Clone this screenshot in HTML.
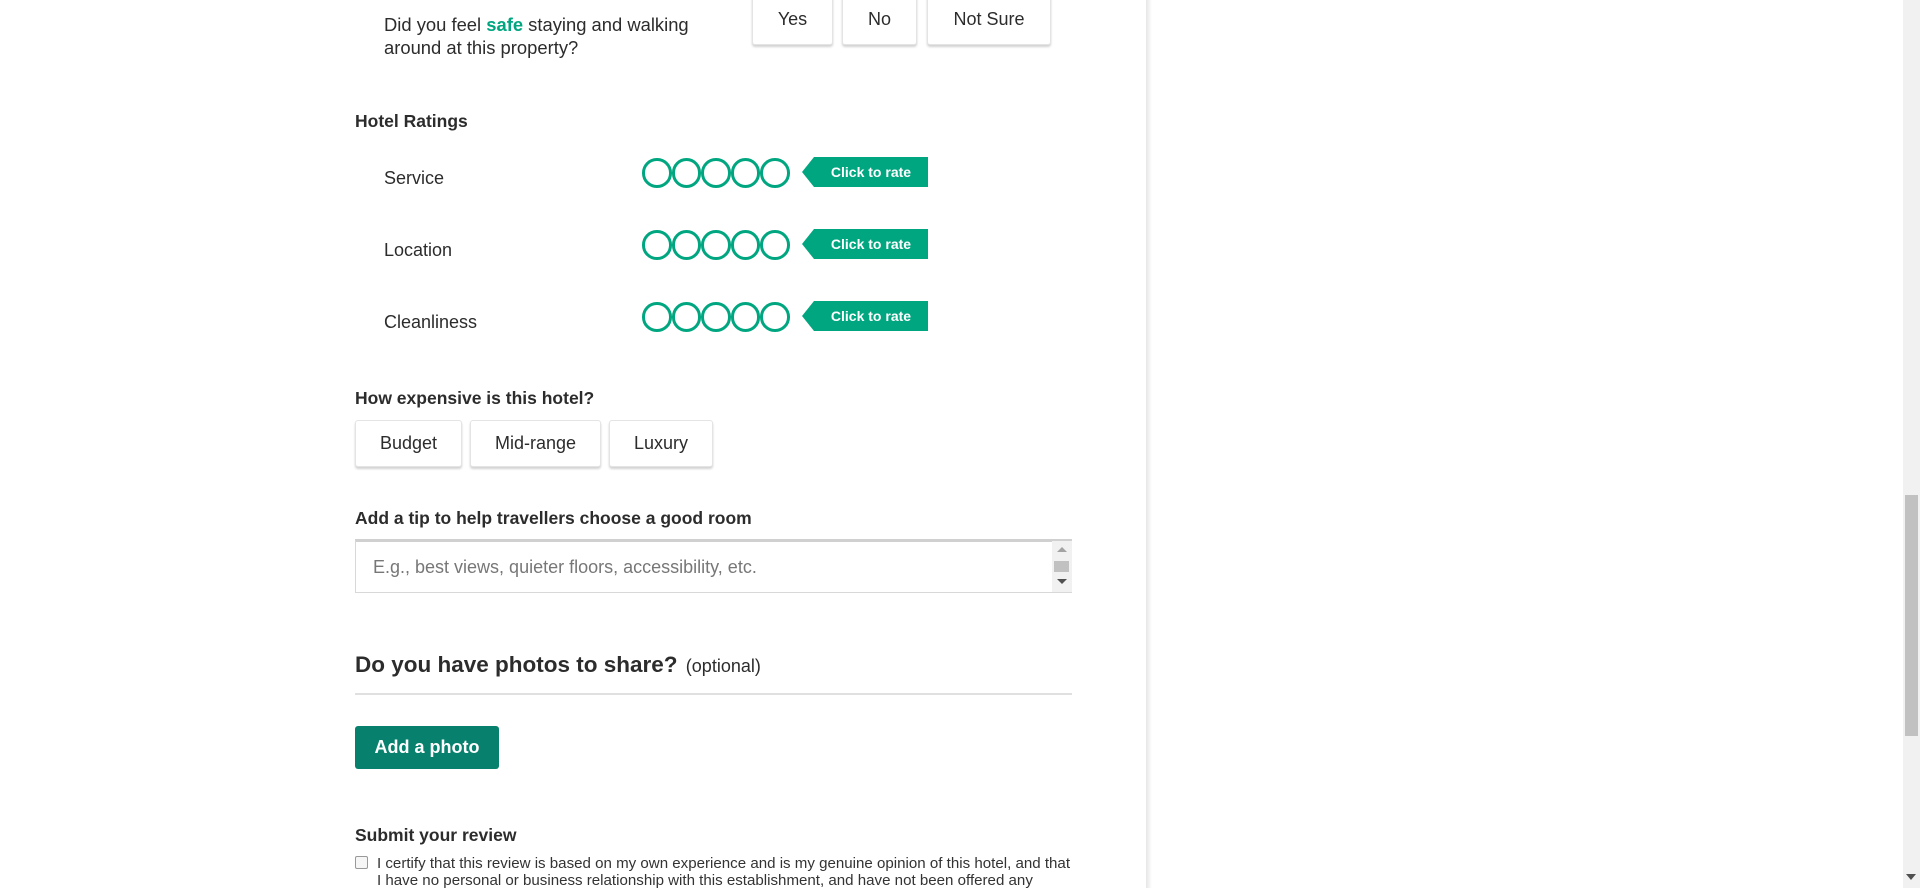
<!DOCTYPE html>
<html><head><meta charset="utf-8"><style>
*{box-sizing:border-box;margin:0;padding:0}
body{width:1920px;height:888px;overflow:hidden;background:#fff;font-family:"Liberation Sans",Arial,sans-serif;color:#2c2c2c;position:relative}
.a{position:absolute;white-space:nowrap}
.btn{position:absolute;background:#fff;border:1px solid #e4e4e4;border-radius:3px;box-shadow:0 2px 2px rgba(0,0,0,.18);font-size:18px;color:#2c2c2c;display:flex;align-items:center;justify-content:center}
.lbl{font-size:18px}
.h{font-size:17.5px;font-weight:bold}
.circles{position:absolute;display:flex}
.circles span{width:29.6px;height:29.6px;border:3px solid #00a680;border-radius:50%;display:block}
.tag{position:absolute;width:126px;height:30px;background:#00a680;color:#fff;font-weight:bold;font-size:14px;display:flex;align-items:center;justify-content:center;padding-left:12px;clip-path:polygon(12px 0,100% 0,100% 100%,12px 100%,0 50%)}
</style></head><body>
<div class="a lbl" style="left:384px;top:13px;line-height:23px;font-size:18.4px">Did you feel <b style="color:#00a680">safe</b> staying and walking<br>around at this property?</div>
<div class="btn" style="left:752px;top:-6px;width:81px;height:51px">Yes</div>
<div class="btn" style="left:842px;top:-6px;width:75px;height:51px">No</div>
<div class="btn" style="left:927px;top:-6px;width:124px;height:51px">Not Sure</div>

<div class="a h" style="left:355px;top:111px">Hotel Ratings</div>

<div class="a lbl" style="left:384px;top:168px">Service</div>
<div class="circles" style="left:642px;top:158px"><span></span><span></span><span></span><span></span><span></span></div>
<div class="tag" style="left:802px;top:157px">Click to rate</div>

<div class="a lbl" style="left:384px;top:240px">Location</div>
<div class="circles" style="left:642px;top:230px"><span></span><span></span><span></span><span></span><span></span></div>
<div class="tag" style="left:802px;top:229px">Click to rate</div>

<div class="a lbl" style="left:384px;top:312px">Cleanliness</div>
<div class="circles" style="left:642px;top:302px"><span></span><span></span><span></span><span></span><span></span></div>
<div class="tag" style="left:802px;top:301px">Click to rate</div>

<div class="a h" style="left:355px;top:388px">How expensive is this hotel?</div>
<div class="btn" style="left:355px;top:420px;width:107px;height:47px">Budget</div>
<div class="btn" style="left:470px;top:420px;width:131px;height:47px">Mid-range</div>
<div class="btn" style="left:609px;top:420px;width:104px;height:47px">Luxury</div>

<div class="a h" style="left:355px;top:508px">Add a tip to help travellers choose a good room</div>
<div class="a" style="left:355px;top:539px;width:717px;height:54px;border:1px solid #d8d8d8;border-top:3px solid #d0d0d0"></div>
<div class="a" style="left:373px;top:557px;font-size:18px;color:#777">E.g., best views, quieter floors, accessibility, etc.</div>
<div class="a" style="left:1052px;top:541px;width:20px;height:51px;background:#f1f1f1"></div>
<div class="a" style="left:1054px;top:561px;width:15px;height:11px;background:#c1c1c1"></div>
<div class="a" style="left:1057px;top:547px;border-left:5px solid transparent;border-right:5px solid transparent;border-bottom:5px solid #a3a3a3"></div>
<div class="a" style="left:1057px;top:579px;border-left:5px solid transparent;border-right:5px solid transparent;border-top:5px solid #505050"></div>

<div class="a" style="left:355px;top:652px;font-size:22.5px;font-weight:bold">Do you have photos to share? <span style="font-size:18px;font-weight:normal;margin-left:2px">(optional)</span></div>
<div class="a" style="left:355px;top:693px;width:717px;height:2px;background:#e0e0e0"></div>
<div class="a" style="left:355px;top:726px;width:144px;height:43px;background:#07816d;border-radius:3px;color:#fff;font-weight:bold;font-size:18px;display:flex;align-items:center;justify-content:center">Add a photo</div>

<div class="a h" style="left:355px;top:825px">Submit your review</div>
<div class="a" style="left:355px;top:856px;width:13px;height:13px;border:1px solid #999;border-radius:2px;background:#f6f6f6"></div>
<div class="a" style="left:377px;top:855px;font-size:15.1px;line-height:17px;color:#333">I certify that this review is based on my own experience and is my genuine opinion of this hotel, and that<br>I have no personal or business relationship with this establishment, and have not been offered any</div>

<div class="a" style="left:1146px;top:0;width:6px;height:888px;background:linear-gradient(to right,#e6e6e6,#fff)"></div>
<div class="a" style="left:1903px;top:0;width:17px;height:888px;background:#f1f1f1"></div>
<div class="a" style="left:1905px;top:495px;width:13px;height:241px;background:#c1c1c1"></div>
<div class="a" style="left:1906px;top:874px;border-left:5px solid transparent;border-right:5px solid transparent;border-top:6px solid #505050"></div>
</body></html>
